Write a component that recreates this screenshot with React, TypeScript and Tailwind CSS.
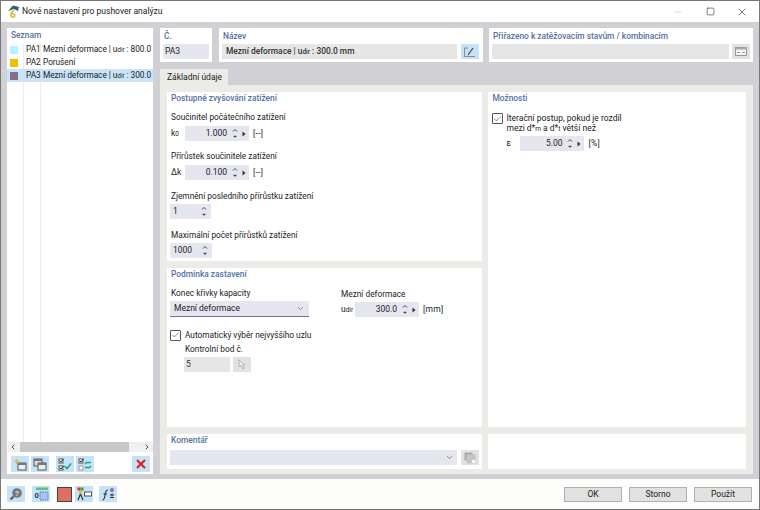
import React from "react";
import { Check, ChevronDown, ChevronLeft, ChevronRight, Minus, Square, X } from "lucide-react";

const font = { fontFamily: 'Roboto, "Open Sans", sans-serif' };

const Heading = ({ children }: { children: React.ReactNode }) => (
  <div className="text-[8.4px] leading-[12px] font-medium text-[#54729f] pl-[1px] whitespace-nowrap">{children}</div>
);

const Label = ({ children, className = "" }: { children: React.ReactNode; className?: string }) => (
  <div className={`text-[8.3px] leading-[12px] text-[#222] pl-[1px] whitespace-nowrap ${className}`}>{children}</div>
);

const Sub = ({ children }: { children: React.ReactNode }) => (
  <span className="text-[6.5px]">{children}</span>
);

const Arrows = () => (
  <svg width="6" height="11" viewBox="0 0 6 11" className="shrink-0">
    <path d="M1 3.5 3 1.5 5 3.5" fill="none" stroke="#444" strokeWidth="1" />
    <path d="M1.5 8 3 9.5 4.5 8Z" fill="#444" stroke="#444" strokeWidth="0.5" />
  </svg>
);

const Spin = ({ value, symbol, unit }: { value: string; symbol: React.ReactNode; unit: string }) => (
  <div className="flex items-center h-[15px]">
    <div className="w-[15px] pl-[1px] text-[8.5px] text-[#222] shrink-0">{symbol}</div>
    <div className="w-[64px] h-[15px] bg-[#e6e6f0] flex items-center justify-end text-[8.5px] text-[#222] pr-[3px]">
      <span className="mr-[5px]">{value}</span>
      <Arrows />
      <svg width="4" height="6" viewBox="0 0 4 6" className="ml-[4px]"><path d="M0.5 0.5 3.5 3 0.5 5.5Z" fill="#333" /></svg>
    </div>
    <div className="ml-[4px] text-[8.5px] text-[#222] tracking-[0.3px] [font-variant-ligatures:none] [font-feature-settings:'liga'_0,'calt'_0]">{unit}</div>
  </div>
);

const SmallSpin = ({ value, width }: { value: string; width: string }) => (
  <div className={`${width} h-[15px] bg-[#e6e6f0] flex items-center justify-between pl-[3px] pr-[4px] text-[8.5px] text-[#222]`}>
    <span>{value}</span>
    <Arrows />
  </div>
);

const CheckBox = () => (
  <div className="w-[11px] h-[11px] border border-[#555] bg-white flex items-center justify-center shrink-0 rounded-[1px]">
    <Check size={10} strokeWidth={1.5} color="#333" />
  </div>
);

const IconBtn = ({ children, className = "" }: { children?: React.ReactNode; className?: string }) => (
  <div className={`w-[18px] h-[16px] bg-[#c4e2f8] flex items-center justify-center shrink-0 ${className}`}>{children}</div>
);

const ListRow = ({ color, id, children, active }: { color: string; id: string; children: React.ReactNode; active?: boolean }) => (
  <div className={`flex items-center h-[13px] whitespace-nowrap text-[8.3px] text-[#222] ${active ? "bg-[#c9e4f9]" : ""}`}>
    <div className="w-[19px] pl-[3px] shrink-0"><div className="w-[8px] h-[8px]" style={{ background: color }} /></div>
    <div className="w-[17px] shrink-0">{id}</div>
    <div className="tracking-[-0.05px]">{children}</div>
  </div>
);

const App = () => {
  return (
    <div style={font} className="w-[760px] h-[510px] flex flex-col bg-[#fdfdfb] border border-[#777] overflow-hidden">
      {/* titlebar */}
      <div className="h-[21px] flex items-center bg-white shrink-0">
        <svg width="13" height="13" viewBox="0 0 13 13" className="ml-[6px] mr-[2px]">
          <path d="M1 6 6 0.5 12 2 11 6 7 4Z" fill="#2d5f82" />
          <text x="3" y="12.5" fontSize="10" fontWeight="700" fill="#e0b020">6</text>
        </svg>
        <div className="text-[8.5px] text-[#222]">Nové nastavení pro pushover analýzu</div>
        <div className="ml-auto flex items-center pr-[1px]">
          <div className="w-[32px] flex justify-center"><Minus size={10} color="#ccc" /></div>
          <div className="w-[32px] flex justify-center"><Square size={9} strokeWidth={1.6} color="#333" /></div>
          <div className="w-[32px] flex justify-center"><X size={12} strokeWidth={1.3} color="#333" /></div>
        </div>
      </div>

      {/* main */}
      <div className="h-[457px] bg-[#d1d1d5] flex gap-[7px] pt-[6px] pb-[5px] px-[6px] shrink-0">
        {/* list */}
        <div className="w-[146px] bg-white flex flex-col">
          <div className="px-[3px] pt-[1px] h-[15px]"><Heading>Seznam</Heading></div>
          <div className="flex-1 relative">
            <div className="absolute left-[16px] top-0 bottom-0 w-px bg-[#eee]" />
            <div className="absolute left-[33px] top-0 bottom-0 w-px bg-[#eee]" />
            <div className="relative">
              <ListRow color="#b4f6fb" id="PA1">Mezní deformace | u<Sub>dir</Sub> : 800.0</ListRow>
              <ListRow color="#e8c400" id="PA2">Porušení</ListRow>
              <ListRow color="#8a6c8c" id="PA3" active>Mezní deformace | u<Sub>dir</Sub> : 300.0</ListRow>
            </div>
          </div>
          <div className="h-[10px] mb-[4px] ml-[1px] bg-[#f0f0f0] flex items-center">
            <ChevronLeft size={8} strokeWidth={2.5} color="#333" className="ml-[1px]" />
            <div className="w-[109px] h-[10px] bg-[#c8c8c8] ml-[3px]" />
            <ChevronRight size={8} strokeWidth={2.5} color="#333" className="ml-auto mr-[2px]" />
          </div>
          <div className="h-[16px] flex items-center pl-[4px] pr-[3px] mb-[2px]">
            <IconBtn>
              <svg width="14" height="13" viewBox="0 0 14 13"><rect x="5" y="5" width="8" height="7" fill="#eee" stroke="#555" /><rect x="5" y="5" width="8" height="2" fill="#777" /><path d="M3.5 0 4.3 2.5 7 3 4.3 3.8 3.5 6.5 2.7 3.8 0 3 2.7 2.5Z" fill="#d9c020" /></svg>
            </IconBtn>
            <IconBtn className="ml-[2px]">
              <svg width="14" height="13" viewBox="0 0 14 13"><rect x="1" y="1" width="8" height="7" fill="#ddd" stroke="#555" /><rect x="1" y="1" width="8" height="2" fill="#777" /><rect x="5" y="5" width="8" height="7" fill="#eee" stroke="#555" /><rect x="5" y="5" width="8" height="2" fill="#777" /></svg>
            </IconBtn>
            <IconBtn className="ml-[7px]">
              <svg width="14" height="13" viewBox="0 0 14 13"><rect x="1" y="1" width="4" height="4" fill="#fff" stroke="#555" /><rect x="1" y="8" width="4" height="4" fill="#fff" stroke="#555" /><path d="M1.8 3 3 4 5.5 0.8M1.8 10 3 11 5.5 7.8" fill="none" stroke="#333" /><path d="M6.5 8 9 10.5 13 5.5" fill="none" stroke="#1aa37a" strokeWidth="1.6" /></svg>
            </IconBtn>
            <IconBtn className="ml-[2px]">
              <svg width="14" height="13" viewBox="0 0 14 13"><rect x="1" y="1" width="4" height="4" fill="#fff" stroke="#555" /><rect x="1" y="8" width="4" height="4" fill="#fff" stroke="#999" /><path d="M1.8 3 3 4 5.5 0.8" fill="none" stroke="#333" /><path d="M7 6 8.5 4.5H13M13 8 11.5 9.5H7" fill="none" stroke="#1aa37a" strokeWidth="1.4" /></svg>
            </IconBtn>
            <IconBtn className="ml-auto">
              <X size={14} strokeWidth={3.2} color="#e81818" />
            </IconBtn>
          </div>
        </div>

        {/* right area */}
        <div className="flex-1 flex flex-col min-w-0">
          <div className="h-[34px] flex shrink-0">
            <div className="w-[52px] bg-white px-[3px] pt-[2px]">
              <Heading>Č.</Heading>
              <div className="mt-[2px] h-[15px] bg-[#e6e6f0] flex items-center px-[2px] text-[8.5px] text-[#222]">PA3</div>
            </div>
            <div className="w-[264px] ml-[7px] bg-white pl-[3px] pr-[4px] pt-[2px]">
              <Heading>Název</Heading>
              <div className="mt-[2px] flex gap-[4px]">
                <div className="flex-1 h-[15px] bg-[#e6e6e6] flex items-center pl-[4px] text-[8.4px] font-medium text-[#333]">
                  <span>Mezní deformace | u<Sub>dir</Sub> : 300.0 mm</span>
                </div>
                <div className="w-[18px] h-[15px] bg-[#c4e2f8] flex items-center justify-center">
                  <svg width="14" height="12" viewBox="0 0 14 12"><path d="M5 2H1.5V10.5H12" fill="none" stroke="#889" /><path d="M5 9 10 2" stroke="#444" strokeWidth="1.2" /></svg>
                </div>
              </div>
            </div>
            <div className="w-[264px] ml-[6px] bg-white px-[3px] pt-[2px]">
              <Heading>Přiřazeno k zatěžovacím stavům / kombinacím</Heading>
              <div className="mt-[2px] flex gap-[3px]">
                <div className="flex-1 h-[15px] bg-[#e6e6e6]" />
                <div className="w-[18px] h-[15px] bg-[#e2e2e2] flex items-center justify-center">
                  <svg width="12" height="9" viewBox="0 0 12 9"><rect x="0.5" y="0.5" width="11" height="8" fill="#f4f4f4" stroke="#999" /><rect x="0.5" y="0.5" width="11" height="2" fill="#aaa" /><path d="M2 5.5H5M7 5.5H10" stroke="#999" /></svg>
                </div>
              </div>
            </div>
          </div>

          <div className="h-[23px] flex items-end shrink-0">
            <div className="w-[68px] h-[16px] bg-[#ebebe7] flex items-center pl-[7px] text-[8.5px] text-[#222]">Základní údaje</div>
          </div>

          {/* tab body */}
          <div className="flex-1 bg-[#ebebe7] flex gap-[6px] px-[7px] pt-[7px] pb-[5px] min-h-0">
            <div className="w-[316px] flex flex-col">
              <div className="h-[169px] bg-white px-[3px]">
                <Heading>Postupné zvyšování zatížení</Heading>
                <Label className="mt-[7px]">Součinitel počátečního zatížení</Label>
                <div className="mt-[3px]"><Spin symbol={<>k<Sub>0</Sub></>} value="1.000" unit="[--]" /></div>
                <Label className="mt-[9px]">Přírůstek součinitele zatížení</Label>
                <div className="mt-[3px]"><Spin symbol="Δk" value="0.100" unit="[--]" /></div>
                <Label className="mt-[10px]">Zjemnění posledního přírůstku zatížení</Label>
                <div className="mt-[2px]"><SmallSpin value="1" width="w-[41px]" /></div>
                <Label className="mt-[10px]">Maximální počet přírůstků zatížení</Label>
                <div className="mt-[2px]"><SmallSpin value="1000" width="w-[42px]" /></div>
              </div>
              <div className="h-[159px] mt-[7px] bg-white px-[3px]">
                <Heading>Podmínka zastavení</Heading>
                <div className="flex mt-[7px]">
                  <div className="w-[170px]">
                    <Label>Konec křivky kapacity</Label>
                    <div className="mt-[2px] w-[139px] h-[16px] bg-[#e6e6f0] border-b border-[#7a6aa8] flex items-center justify-between px-[4px] text-[8.5px] text-[#222]">
                      <span>Mezní deformace</span>
                      <ChevronDown size={9} color="#777" />
                    </div>
                  </div>
                  <div className="pt-[1px]">
                    <Label>Mezní deformace</Label>
                    <div className="mt-[2px]"><Spin symbol={<>u<Sub>dir</Sub></>} value="300.0" unit="[mm]" /></div>
                  </div>
                </div>
                <div className="flex items-center gap-[3px] mt-[12px]">
                  <CheckBox />
                  <Label>Automatický výběr nejvyššího uzlu</Label>
                </div>
                <div className="ml-[14px]">
                  <Label className="mt-[2px]">Kontrolní bod č.</Label>
                  <div className="flex gap-[3px] mt-[2px]">
                    <div className="w-[46px] h-[15px] bg-[#e6e6e6] flex items-center px-[2px] text-[8.5px] text-[#333]">5</div>
                    <div className="w-[18px] h-[15px] bg-[#e2e2e2] flex items-center justify-center">
                      <svg width="10" height="11" viewBox="0 0 10 11"><path d="M2 1 2 8 4 6.5 6 10 7.5 9.2 5.5 6H8Z" fill="#eee" stroke="#aaa" strokeWidth="0.8" /></svg>
                    </div>
                  </div>
                </div>
              </div>
              <div className="flex-1 mt-[7px] bg-white px-[3px]">
                <Heading>Komentář</Heading>
                <div className="mt-[4px] flex gap-[4px]">
                  <div className="flex-1 h-[15px] bg-[#e6e6f0] flex items-center justify-end pr-[3px]">
                    <ChevronDown size={9} color="#666" />
                  </div>
                  <div className="w-[18px] h-[15px] bg-[#e2e2e2] flex items-center justify-center">
                    <svg width="12" height="12" viewBox="0 0 12 12"><rect x="0.5" y="0.5" width="8" height="8" fill="#aaa" /><rect x="2.5" y="2.5" width="9" height="9" fill="#c4c4c4" /><rect x="8" y="8" width="3" height="3" fill="#fff" /></svg>
                  </div>
                </div>
              </div>
            </div>

            <div className="w-[258px] flex flex-col">
              <div className="h-[335px] bg-white px-[3px]">
                <Heading>Možnosti</Heading>
                <div className="flex gap-[3px] mt-[9px] pl-[1px]">
                  <CheckBox />
                  <div className="text-[8.5px] leading-[10px] text-[#222]">
                    Iterační postup, pokud je rozdíl<br />mezi d*<Sub>m</Sub> a d*<Sub>t</Sub> větší než
                  </div>
                </div>
                <div className="mt-[2px] ml-[14px]">
                  <Spin symbol="ε" value="5.00" unit="[%]" />
                </div>
              </div>
              <div className="flex-1 mt-[7px] bg-white" />
            </div>
          </div>
        </div>
      </div>

      {/* footer */}
      <div className="flex-1 flex items-center pl-[6px] pr-[7px]">
        <IconBtn>
          <svg width="14" height="14" viewBox="0 0 14 14"><circle cx="8" cy="6" r="4.8" fill="#777" /><path d="M4.5 9.5 1.5 12.5" stroke="#555" strokeWidth="2" /><text x="8" y="9" textAnchor="middle" fontSize="8" fontWeight="700" fill="#ddd">?</text></svg>
        </IconBtn>
        <IconBtn className="ml-[7px]">
          <svg width="15" height="14" viewBox="0 0 15 14"><rect x="2" y="0.5" width="12" height="2.5" fill="#5fc27a" /><text x="0.5" y="11" fontSize="7.5" fontWeight="700" fill="#333">0</text><rect x="6" y="5" width="8" height="8" fill="#a9c4ee" stroke="#4a78d0" strokeDasharray="1.5 1" /></svg>
        </IconBtn>
        <div className="w-[15px] h-[15px] bg-[#dd7060] border border-[#444] ml-[7px]" />
        <IconBtn className="ml-[3px]">
          <svg width="15" height="14" viewBox="0 0 15 14"><rect x="0.5" y="0.5" width="3" height="3" fill="#e03030" /><rect x="3.5" y="0.5" width="3" height="3" fill="#40a040" /><rect x="2" y="3.5" width="3" height="3" fill="#e0c020" /><path d="M3.5 7 1 13M3.5 7 6 13" stroke="#333" strokeWidth="1.2" /><rect x="7.5" y="5" width="7" height="4" fill="#fff" stroke="#555" /></svg>
        </IconBtn>
        <IconBtn className="ml-[6px]">
          <svg width="15" height="14" viewBox="0 0 15 14"><path d="M1.5 13C4 13 3.5 9 4.5 5.5 5 3.5 6 3 7 3" fill="none" stroke="#333" strokeWidth="1.1" /><path d="M2.5 7H6" stroke="#333" /><path d="M9 10.5H13M11 6.5V9.5M9 8H13" stroke="#333" /><circle cx="11" cy="3" r="2" fill="#8a6cb0" /></svg>
        </IconBtn>
        <div className="ml-auto flex gap-[7px]">
          {["OK", "Storno", "Použít"].map((b) => (
            <div key={b} className="w-[58px] h-[15px] bg-[#e1e1e1] border border-[#b0b0b0] flex items-center justify-center text-[8.5px] text-[#222]">{b}</div>
          ))}
        </div>
      </div>
    </div>
  );
};

export default App;
